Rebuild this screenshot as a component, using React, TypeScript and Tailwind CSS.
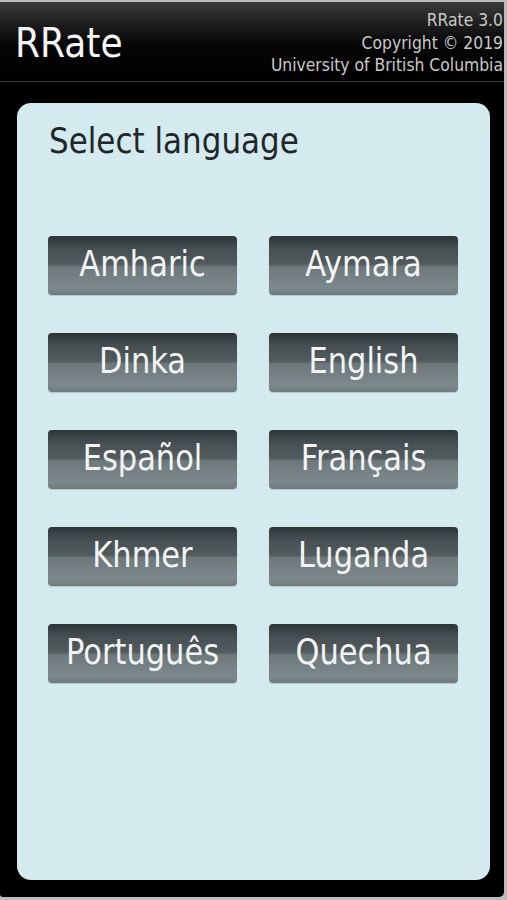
import React from "react";

const languages = [
  "Amharic",
  "Aymara",
  "Dinka",
  "English",
  "Español",
  "Français",
  "Khmer",
  "Luganda",
  "Português",
  "Quechua",
];

const LangButton = ({ label }: { label: string }) => (
  <button className="flex h-[59px] w-[189px] items-center justify-center rounded-[4px] bg-[linear-gradient(to_bottom,#2c3436_0%,#465052_22%,#525b5e_48%,#6d787b_52%,#7c888b_88%,#6e7a7c_100%)] pb-[2px] shadow-[0_1px_1px_rgba(0,0,0,0.15)]">
    <span className="block scale-y-[1.14] text-[30.5px] leading-[36px] text-[#f2f4f4]">
      {label}
    </span>
  </button>
);

export default function App() {
  return (
    <main
      className="h-[900px] w-[507px] bg-[#bcbcbc] pt-[2px] pr-[3px] pb-[3px]"
      style={{ fontFamily: '"DejaVu Sans", Verdana, sans-serif' }}
    >
      <div className="flex h-full flex-col overflow-hidden rounded-br-[5px] rounded-bl-[3px] bg-black">
        {/* header */}
        <header className="flex h-[79px] justify-between bg-[linear-gradient(to_bottom,#3a3a3a_0%,#1c1c1c_30%,#050505_55%,#000_100%)]">
          <div className="pl-[15px] pt-[20px]">
            <h1 className="scale-y-[1.15] text-[36px] leading-[42px] text-[#f5f5f5]">
              RRate
            </h1>
          </div>
          <div className="origin-top scale-y-[1.15] pt-[7px] pr-[1px] text-right text-[15.6px] leading-[19.5px] text-[#c9c9c9]">
            <p>RRate 3.0</p>
            <p>Copyright © 2019</p>
            <p>University of British Columbia</p>
          </div>
        </header>
        <div className="h-px bg-[#3a3a3a]" />

        {/* body */}
        <div className="flex-1 pt-[21px] pr-[14px] pb-[17px] pl-[17px]">
          <section className="h-full rounded-[14px] bg-[#d3eaef] pt-[19px] pl-[31px]">
            <h2 className="pl-[1px] scale-y-[1.15] origin-center text-[31px] leading-[36px] text-[#222629] w-fit">
              Select language
            </h2>
            <div className="mt-[78px] grid w-fit grid-cols-[189px_189px] gap-x-[32px] gap-y-[38px]">
              {languages.map((l) => (
                <LangButton key={l} label={l} />
              ))}
            </div>
          </section>
        </div>
      </div>
    </main>
  );
}
